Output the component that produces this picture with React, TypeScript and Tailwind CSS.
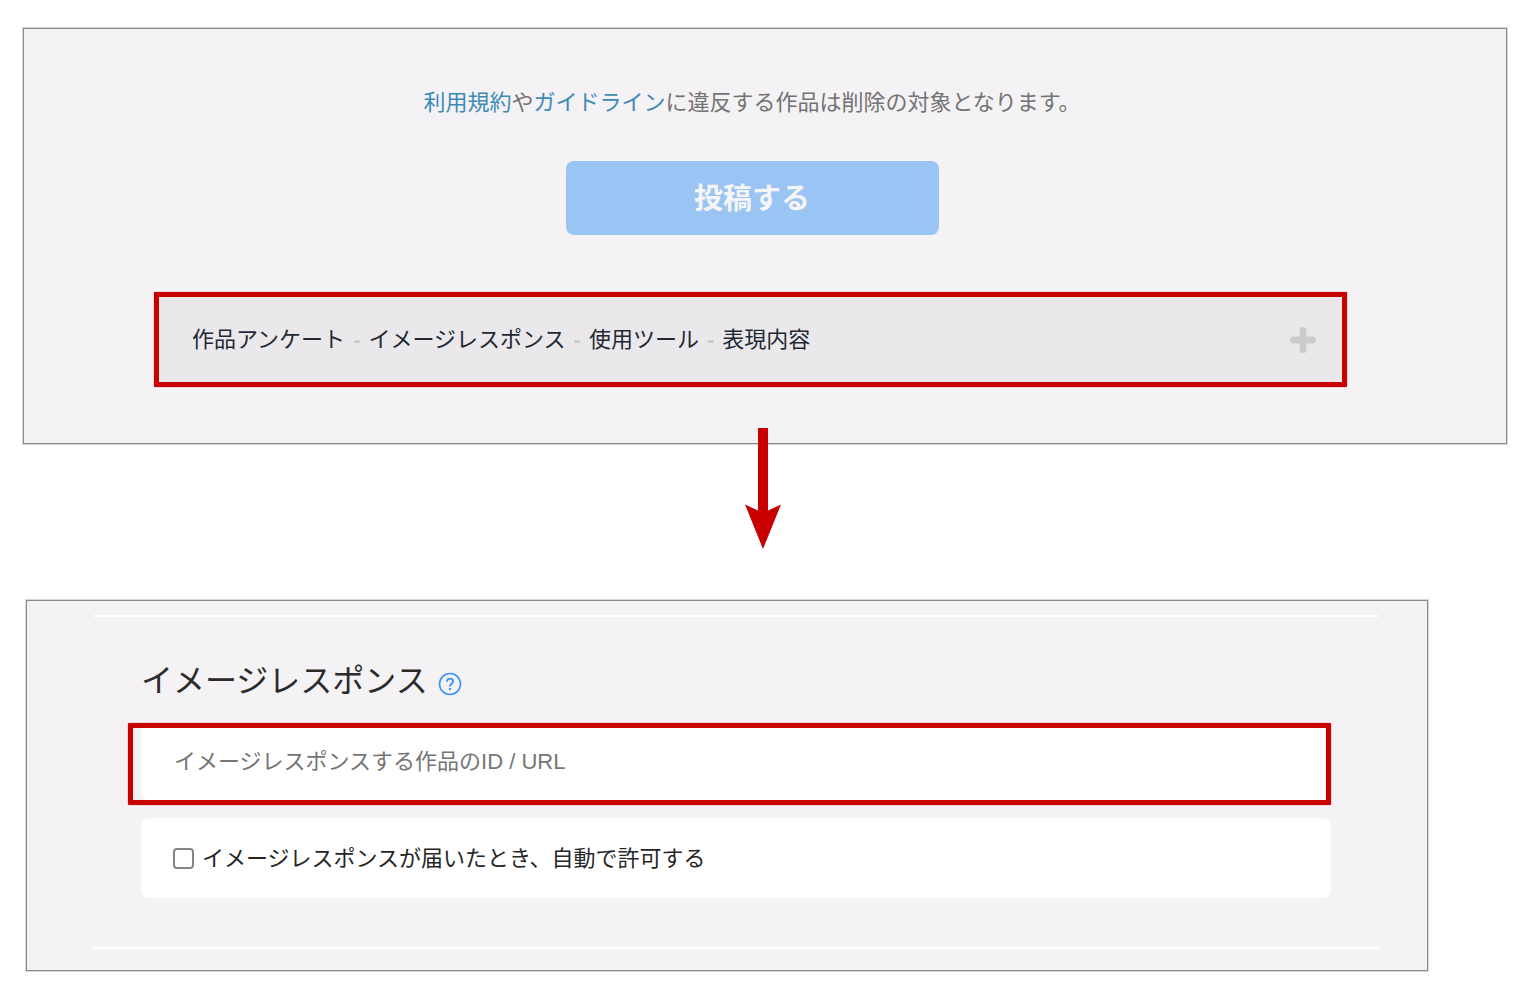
import { Fragment, useState } from "react";

const categories = ["作品アンケート", "イメージレスポンス", "使用ツール", "表現内容"];

const cardClass =
  "border border-[#8a8a8a] bg-[#f4f2f5] shadow-[0_0_0_1px_#d8d8d8]";

const highlightClass =
  "rounded-[1px] border-5 border-[#c80000] shadow-[0_0_1px_#c80000]";

function SubmitCard() {
  return (
    <section className={`${cardClass} pt-[58px] pr-[159px] pb-14 pl-[130px]`}>
      <div className="flex flex-col items-center pl-[3px]">
        <p className="text-[22px] leading-8 text-[#737373]">
          <a href="#terms" className="text-[#3d8ab5]">利用規約</a>
          や
          <a href="#guideline" className="text-[#3d8ab5]">ガイドライン</a>
          に違反する作品は削除の対象となります。
        </p>
        <button
          type="button"
          className="mt-[42px] h-[74px] w-[373px] rounded-lg bg-[#9ac4f3] pt-1 text-[29px] font-bold text-[#f5f5f7]"
        >
          投稿する
        </button>
      </div>
      <button
        type="button"
        className={`${highlightClass} mt-[57px] flex h-[95px] w-full items-center justify-between bg-[#eae8eb] pr-[26px] pl-[33px] text-[22px] text-[#1f2933]`}
      >
        <span className="flex items-center gap-2">
          {categories.map((name, i) => (
            <Fragment key={name}>
              {i > 0 && <span className="font-bold text-[#c9c9cb]">-</span>}
              <span>{name}</span>
            </Fragment>
          ))}
        </span>
        <svg viewBox="0 0 26 26" className="size-[26px]" aria-hidden="true">
          <path d="M13 3.5v19M3.5 13h19" stroke="#cbcbcb" strokeWidth="7" strokeLinecap="round" />
        </svg>
      </button>
    </section>
  );
}

function Arrow() {
  return (
    <div className="relative -mt-4 flex justify-center pr-1">
      <svg viewBox="0 0 36 121" className="h-[121px] w-9" aria-hidden="true">
        <path d="M13 0h10v82.5l13-6L18 121 0 76.5l13 6z" fill="#c80000" />
      </svg>
    </div>
  );
}

function HelpIcon() {
  return (
    <svg viewBox="0 0 24 24" fill="none" stroke="#3a93f8" className="size-6" aria-hidden="true">
      <circle cx="12" cy="12" r="10.5" strokeWidth="1.6" />
      <path d="M8.9 9.6C9 7.7 10.2 6.6 12.1 6.6c1.8 0 3 1.1 3 2.6 0 1.2-.6 1.9-1.6 2.6-1.1.8-1.5 1.2-1.5 2.3v.4" strokeWidth="1.9" />
      <circle cx="12" cy="16.9" r="1.2" fill="#3a93f8" stroke="none" />
    </svg>
  );
}

function ImageResponseCard() {
  const [target, setTarget] = useState("");
  const [autoAllow, setAutoAllow] = useState(false);

  return (
    <section className={`${cardClass} mt-[51px] mr-[79px] ml-[3px] pt-3.5 pr-12 pb-[21px] pl-[66px]`}>
      <div className="border-y-2 border-white px-12 pt-10 pb-[49px]">
        <div className="flex h-12 items-center gap-2.5">
          <h2 className="text-[32px] leading-[48px] text-[#2b2b2b]">
            <label htmlFor="response-target">イメージレスポンス</label>
          </h2>
          <button type="button" aria-label="ヘルプ" className="mt-1.5">
            <HelpIcon />
          </button>
        </div>
        <div className={`${highlightClass} mt-[18px] -ml-[13px] pl-2`}>
          <input
            id="response-target"
            type="text"
            value={target}
            onChange={(e) => setTarget(e.target.value)}
            placeholder="イメージレスポンスする作品のID / URL"
            className="block h-[72px] w-full rounded-bl-lg bg-white px-[33px] pb-1 text-[22px] text-[#2b2b2b] outline-none placeholder:text-[#757575]"
          />
        </div>
        <label className="mt-[13px] flex h-20 items-center gap-2 rounded-lg bg-white px-8 text-[22px] text-[#262626]">
          <input
            type="checkbox"
            checked={autoAllow}
            onChange={(e) => setAutoAllow(e.target.checked)}
            className="size-[21px] appearance-none rounded-sm border-2 border-[#858585] bg-white checked:bg-[#3a93f8]"
          />
          イメージレスポンスが届いたとき、自動で許可する
        </label>
      </div>
    </section>
  );
}

export default function App() {
  return (
    <main
      lang="ja"
      className="min-h-screen bg-white px-[23px] pt-7 pb-6 font-['Liberation_Sans','Noto_Sans_CJK_JP',sans-serif]"
    >
      <SubmitCard />
      <Arrow />
      <ImageResponseCard />
    </main>
  );
}
